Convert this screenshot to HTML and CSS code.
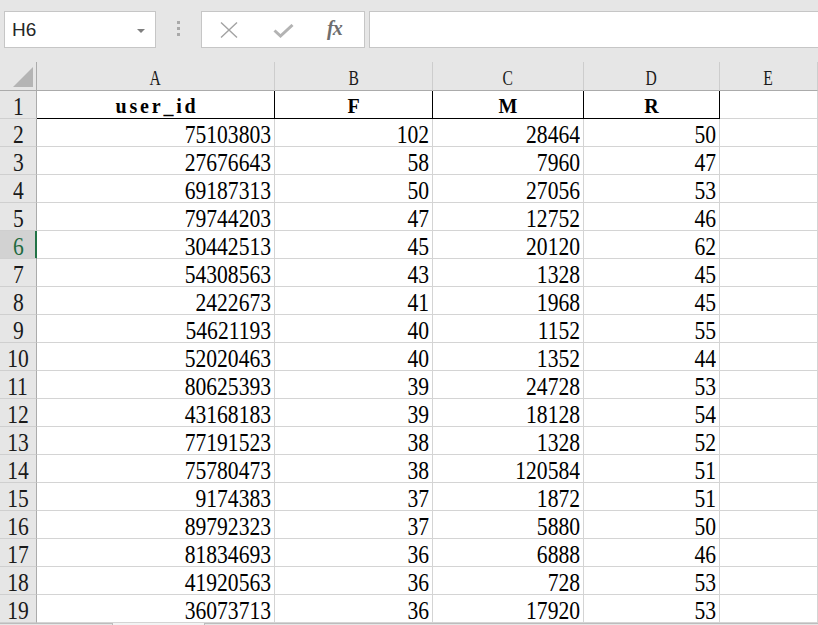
FILE: index.html
```html
<!DOCTYPE html>
<html>
<head>
<meta charset="utf-8">
<link rel="stylesheet" href="styles.css">
</head>
<body>
<div class="toolbar">
  <div class="namebox"><span>H6</span><span class="caret"></span></div>
  <div class="grip"><span class="dot"></span><span class="dot"></span><span class="dot"></span></div>
  <div class="fxbox">
    <svg class="ic-x" width="18" height="16" viewBox="0 0 18 16"><path d="M1 0.5 L17 15.5 M17 0.5 L1 15.5" stroke="#a3a3a3" stroke-width="1.4" fill="none"/></svg>
    <svg class="ic-ok" width="21" height="14" viewBox="0 0 21 14"><path d="M1.5 6.5 L7.5 12 L19.5 1" stroke="#b3b3b3" stroke-width="3" fill="none"/></svg>
    <span class="fx">fx</span>
  </div>
  <div class="formula"></div>
</div>

<div class="sheet">
  <div class="corner"><span class="tri"></span></div>
  <div class="ch"><span class="t">A</span></div>
  <div class="ch"><span class="t">B</span></div>
  <div class="ch"><span class="t">C</span></div>
  <div class="ch"><span class="t">D</span></div>
  <div class="ch"><span class="t">E</span></div>
  <div class="ch"></div>

  <div class="rh"><span class="v">1</span></div>
  <div class="c hd"><span class="b uid">user_id</span></div>
  <div class="c hd"><span class="b">F</span></div>
  <div class="c hd"><span class="b">M</span></div>
  <div class="c hd"><span class="b">R</span></div>
  <div class="c"></div>
  <div class="c"></div>

  <div class="rh"><span class="v">2</span></div><div class="c n"><span class="v">75103803</span></div><div class="c n"><span class="v">102</span></div><div class="c n"><span class="v">28464</span></div><div class="c n"><span class="v">50</span></div><div class="c"></div><div class="c"></div>
  <div class="rh"><span class="v">3</span></div><div class="c n"><span class="v">27676643</span></div><div class="c n"><span class="v">58</span></div><div class="c n"><span class="v">7960</span></div><div class="c n"><span class="v">47</span></div><div class="c"></div><div class="c"></div>
  <div class="rh"><span class="v">4</span></div><div class="c n"><span class="v">69187313</span></div><div class="c n"><span class="v">50</span></div><div class="c n"><span class="v">27056</span></div><div class="c n"><span class="v">53</span></div><div class="c"></div><div class="c"></div>
  <div class="rh"><span class="v">5</span></div><div class="c n"><span class="v">79744203</span></div><div class="c n"><span class="v">47</span></div><div class="c n"><span class="v">12752</span></div><div class="c n"><span class="v">46</span></div><div class="c"></div><div class="c"></div>
  <div class="rh sel"><span class="v">6</span></div><div class="c n"><span class="v">30442513</span></div><div class="c n"><span class="v">45</span></div><div class="c n"><span class="v">20120</span></div><div class="c n"><span class="v">62</span></div><div class="c"></div><div class="c"></div>
  <div class="rh"><span class="v">7</span></div><div class="c n"><span class="v">54308563</span></div><div class="c n"><span class="v">43</span></div><div class="c n"><span class="v">1328</span></div><div class="c n"><span class="v">45</span></div><div class="c"></div><div class="c"></div>
  <div class="rh"><span class="v">8</span></div><div class="c n"><span class="v">2422673</span></div><div class="c n"><span class="v">41</span></div><div class="c n"><span class="v">1968</span></div><div class="c n"><span class="v">45</span></div><div class="c"></div><div class="c"></div>
  <div class="rh"><span class="v">9</span></div><div class="c n"><span class="v">54621193</span></div><div class="c n"><span class="v">40</span></div><div class="c n"><span class="v">1152</span></div><div class="c n"><span class="v">55</span></div><div class="c"></div><div class="c"></div>
  <div class="rh"><span class="v">10</span></div><div class="c n"><span class="v">52020463</span></div><div class="c n"><span class="v">40</span></div><div class="c n"><span class="v">1352</span></div><div class="c n"><span class="v">44</span></div><div class="c"></div><div class="c"></div>
  <div class="rh"><span class="v">11</span></div><div class="c n"><span class="v">80625393</span></div><div class="c n"><span class="v">39</span></div><div class="c n"><span class="v">24728</span></div><div class="c n"><span class="v">53</span></div><div class="c"></div><div class="c"></div>
  <div class="rh"><span class="v">12</span></div><div class="c n"><span class="v">43168183</span></div><div class="c n"><span class="v">39</span></div><div class="c n"><span class="v">18128</span></div><div class="c n"><span class="v">54</span></div><div class="c"></div><div class="c"></div>
  <div class="rh"><span class="v">13</span></div><div class="c n"><span class="v">77191523</span></div><div class="c n"><span class="v">38</span></div><div class="c n"><span class="v">1328</span></div><div class="c n"><span class="v">52</span></div><div class="c"></div><div class="c"></div>
  <div class="rh"><span class="v">14</span></div><div class="c n"><span class="v">75780473</span></div><div class="c n"><span class="v">38</span></div><div class="c n"><span class="v">120584</span></div><div class="c n"><span class="v">51</span></div><div class="c"></div><div class="c"></div>
  <div class="rh"><span class="v">15</span></div><div class="c n"><span class="v">9174383</span></div><div class="c n"><span class="v">37</span></div><div class="c n"><span class="v">1872</span></div><div class="c n"><span class="v">51</span></div><div class="c"></div><div class="c"></div>
  <div class="rh"><span class="v">16</span></div><div class="c n"><span class="v">89792323</span></div><div class="c n"><span class="v">37</span></div><div class="c n"><span class="v">5880</span></div><div class="c n"><span class="v">50</span></div><div class="c"></div><div class="c"></div>
  <div class="rh"><span class="v">17</span></div><div class="c n"><span class="v">81834693</span></div><div class="c n"><span class="v">36</span></div><div class="c n"><span class="v">6888</span></div><div class="c n"><span class="v">46</span></div><div class="c"></div><div class="c"></div>
  <div class="rh"><span class="v">18</span></div><div class="c n"><span class="v">41920563</span></div><div class="c n"><span class="v">36</span></div><div class="c n"><span class="v">728</span></div><div class="c n"><span class="v">53</span></div><div class="c"></div><div class="c"></div>
  <div class="rh"><span class="v">19</span></div><div class="c n"><span class="v">36073713</span></div><div class="c n"><span class="v">36</span></div><div class="c n"><span class="v">17920</span></div><div class="c n"><span class="v">53</span></div><div class="c"></div><div class="c"></div>
</div>

<div class="footer">
  <div class="fbox left"></div>
  <div class="fgap"></div>
  <div class="fbox right"></div>
</div>
</body>
</html>
```

FILE: styles.css
```css
* { box-sizing: border-box; }
html, body {
  margin: 0;
  height: 625px;
  overflow: hidden;
  background: #e6e6e6;
}

/* ---------- formula toolbar ---------- */
.toolbar {
  display: flex;
  align-items: flex-start;
  height: 62px;
  padding: 11px 0 0 4px;
}
.namebox {
  width: 152px;
  height: 37px;
  background: #fff;
  border: 1px solid #c6c6c6;
  display: flex;
  align-items: center;
  justify-content: space-between;
  padding: 0 10px 0 7px;
  font: 19px "Liberation Sans", Arial, sans-serif;
  color: #262626;
}
.caret {
  width: 0;
  height: 0;
  border-left: 4px solid transparent;
  border-right: 4px solid transparent;
  border-top: 4px solid #7f7f7f;
  margin-top: 2px;
}
.grip {
  width: 45px;
  display: flex;
  flex-direction: column;
  align-items: center;
  gap: 3px;
  padding-top: 10px;
}
.dot {
  width: 3px;
  height: 3px;
  background: #a9a9a9;
}
.fxbox {
  width: 164px;
  height: 37px;
  background: #fff;
  border: 1px solid #c6c6c6;
  display: flex;
  align-items: center;
  padding-left: 18px;
}
.ic-x { margin-top: 1px; }
.ic-ok { margin-left: 35px; margin-top: 2px; }
.fx {
  margin-left: 33px;
  font: italic bold 20px "Liberation Serif", "Times New Roman", serif;
  color: #6e6e6e;
  letter-spacing: -1px;
  margin-top: -2px;
}
.formula {
  flex: 1;
  margin-left: 4px;
  height: 37px;
  background: #fff;
  border: 1px solid #c6c6c6;
  border-right: none;
}

/* ---------- sheet grid ---------- */
.sheet {
  display: grid;
  grid-template-columns: 37px 238px 158px 151px 136px 98px 1fr;
  grid-template-rows: 29px repeat(19, 28px);
  background: #fff;
  font-family: "Liberation Serif", "Times New Roman", serif;
  color: #000;
}
.corner {
  background: #e6e6e6;
  border-right: 1px solid #ababab;
  border-bottom: 1px solid #ababab;
  position: relative;
}
.tri {
  position: absolute;
  left: 13px;
  top: 5px;
  width: 0;
  height: 0;
  border-left: 20px solid transparent;
  border-bottom: 20px solid #b4b4b4;
}
.ch {
  background: #e6e6e6;
  border-right: 1px solid #cdcdcd;
  border-bottom: 1px solid #ababab;
  display: flex;
  justify-content: center;
  overflow: visible;
}
.ch .t {
  display: block;
  font-size: 20px;
  line-height: 32px;
  height: 28px;
  transform: scaleX(0.78);
  color: #1a1a1a;
}
.rh {
  background: #e6e6e6;
  border-right: 1px solid #ababab;
  border-bottom: 1px solid #cfcfcf;
  display: flex;
  justify-content: center;
  color: #1a1a1a;
}
.rh.sel {
  background: #d2d2d2;
  border-right-color: #217346;
  box-shadow: inset -1px 0 0 #217346;
  color: #1e6b40;
}
.c {
  border-right: 1px solid #d4d4d4;
  border-bottom: 1px solid #d4d4d4;
  display: flex;
  overflow: visible;
  white-space: nowrap;
}
.c.n {
  justify-content: flex-end;
  padding-right: 3px;
}
.v {
  display: block;
  font-size: 26px;
  line-height: 31px;
  height: 27px;
  transform: scaleX(0.83);
  transform-origin: right center;
}
.rh .v { transform-origin: center center; }
.c.hd {
  border-right-color: #000;
  border-bottom-color: #000;
  justify-content: center;
}
.b {
  display: block;
  font-size: 20px;
  font-weight: bold;
  line-height: 30px;
  height: 27px;
}
.uid {
  letter-spacing: 2.8px;
  margin-left: 3px;
}

/* ---------- bottom strip ---------- */
.footer {
  display: flex;
  height: 10px;
}
.fbox {
  background: #e6e6e6;
  border-top: 1px solid #bdbdbd;
}
.fbox.left { width: 113px; border-right: 1px solid #bdbdbd; }
.fgap { width: 91px; background: #f3f3f3; }
.fbox.right { flex: 1; border-left: 1px solid #bdbdbd; }
```
